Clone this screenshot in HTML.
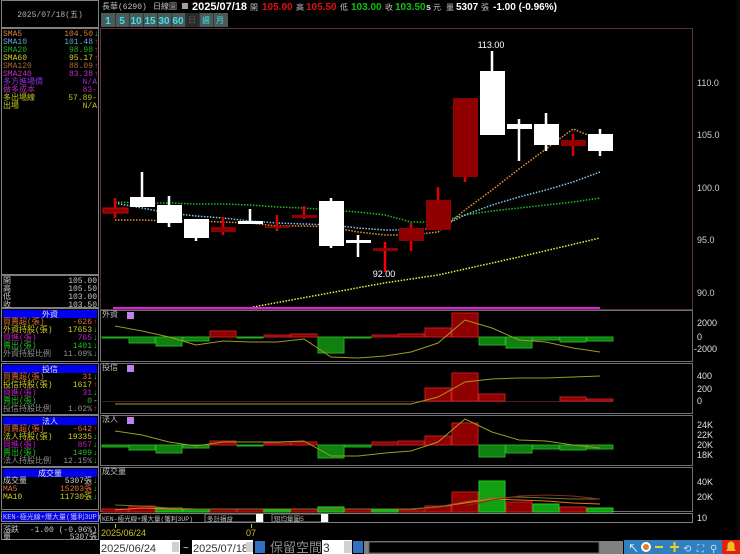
<!DOCTYPE html>
<html><head><meta charset="utf-8"><style>
html,body{margin:0;padding:0;background:#000;width:740px;height:554px;overflow:hidden}
svg{display:block}
text{font-family:"Liberation Mono","Noto Sans CJK TC",monospace;font-size:8px}
.s{font-family:"Liberation Sans","Noto Sans CJK TC",sans-serif}
</style></head><body>
<svg width="740" height="554" viewBox="0 0 740 554" xmlns="http://www.w3.org/2000/svg">
<rect width="740" height="554" fill="#000"/>
<!-- left panel -->
<rect x="1.5" y="0.5" width="97" height="27" fill="none" stroke="#808080"/>
<text x="50" y="17" fill="#b0b0b0" text-anchor="middle">2025/07/18(五)</text>
<rect x="1.5" y="28.5" width="97" height="246" fill="none" stroke="#808080"/>
<g text-anchor="start" style="font-size:7.5px">
<text x="3" y="36" fill="#e08030">SMA5</text><text x="93" y="36" fill="#e08030" text-anchor="end">104.50</text><text x="94" y="36" fill="#20d020">↓</text>
<text x="3" y="44" fill="#60a8d0">SMA10</text><text x="93" y="44" fill="#60a8d0" text-anchor="end">101.48</text><text x="94" y="44" fill="#e02020">↑</text>
<text x="3" y="52" fill="#20b020">SMA20</text><text x="93" y="52" fill="#20b020" text-anchor="end">98.98</text><text x="94" y="52" fill="#e02020">↑</text>
<text x="3" y="60" fill="#d0d020">SMA60</text><text x="93" y="60" fill="#d0d020" text-anchor="end">95.17</text><text x="94" y="60" fill="#e02020">↑</text>
<text x="3" y="68" fill="#b06830">SMA120</text><text x="93" y="68" fill="#b06830" text-anchor="end">88.09</text><text x="94" y="68" fill="#e02020">↑</text>
<text x="3" y="76" fill="#c030c0">SMA240</text><text x="93" y="76" fill="#c030c0" text-anchor="end">83.38</text><text x="94" y="76" fill="#e02020">↑</text>
<text x="3" y="84" fill="#9030e0">多方進場價</text><text x="97" y="84" fill="#9030e0" text-anchor="end">N/A</text>
<text x="3" y="92" fill="#b030b0">做多成本</text><text x="97" y="92" fill="#b030b0" text-anchor="end">83-</text>
<text x="3" y="100" fill="#c0c020">多出場線</text><text x="97" y="100" fill="#c0c020" text-anchor="end">57.89-</text>
<text x="3" y="108" fill="#c0c020">出場</text><text x="97" y="108" fill="#c0c020" text-anchor="end">N/A</text>
</g>
<rect x="1.5" y="275.5" width="97" height="32" fill="none" stroke="#808080"/>
<g fill="#c8c8c8">
<text x="3" y="283">開</text><text x="97" y="283" text-anchor="end">105.00</text>
<text x="3" y="291">高</text><text x="97" y="291" text-anchor="end">105.50</text>
<text x="3" y="299">低</text><text x="97" y="299" text-anchor="end">103.00</text>
<text x="3" y="307">收</text><text x="97" y="307" text-anchor="end">103.50</text>
</g>
<!-- sections -->
<g style="font-size:7.5px">
<rect x="1.5" y="308.5" width="97" height="53" fill="none" stroke="#808080"/>
<rect x="3" y="310" width="94" height="8" fill="#0000f0"/><text x="50" y="317" fill="#e0e0e0" text-anchor="middle">外資</text>
<text x="3" y="324" fill="#e07030">買賣超(張)</text><text x="92" y="324" fill="#e07030" text-anchor="end">-626</text><text x="93" y="324" fill="#e02020">↑</text>
<text x="3" y="332" fill="#d0d020">外資持股(張)</text><text x="92" y="332" fill="#d0d020" text-anchor="end">17653</text><text x="93" y="332" fill="#20d020">↓</text>
<text x="3" y="340" fill="#c020c0">買進(張)</text><text x="92" y="340" fill="#c020c0" text-anchor="end">765</text><text x="93" y="340" fill="#20d020">↓</text>
<text x="3" y="348" fill="#20c020">賣出(張)</text><text x="92" y="348" fill="#20c020" text-anchor="end">1401</text><text x="93" y="348" fill="#20d020">↓</text>
<text x="3" y="356" fill="#909090">外資持股比例</text><text x="92" y="356" fill="#909090" text-anchor="end">11.09%</text><text x="93" y="356" fill="#20d020">↓</text>

<rect x="1.5" y="363.5" width="97" height="51" fill="none" stroke="#808080"/>
<rect x="3" y="365" width="94" height="8" fill="#0000f0"/><text x="50" y="372" fill="#e0e0e0" text-anchor="middle">投信</text>
<text x="3" y="379" fill="#e07030">買賣超(張)</text><text x="92" y="379" fill="#e07030" text-anchor="end">31</text><text x="93" y="379" fill="#20d020">↓</text>
<text x="3" y="387" fill="#d0d020">投信持股(張)</text><text x="92" y="387" fill="#d0d020" text-anchor="end">1617</text><text x="93" y="387" fill="#e02020">↑</text>
<text x="3" y="395" fill="#c020c0">買進(張)</text><text x="92" y="395" fill="#c020c0" text-anchor="end">31</text><text x="93" y="395" fill="#20d020">↓</text>
<text x="3" y="403" fill="#20c020">賣出(張)</text><text x="92" y="403" fill="#20c020" text-anchor="end">0</text><text x="93" y="403" fill="#c0c0c0">-</text>
<text x="3" y="411" fill="#909090">投信持股比例</text><text x="92" y="411" fill="#909090" text-anchor="end">1.02%</text><text x="93" y="411" fill="#e02020">↑</text>

<rect x="1.5" y="415.5" width="97" height="51" fill="none" stroke="#808080"/>
<rect x="3" y="417" width="94" height="8" fill="#0000f0"/><text x="50" y="424" fill="#e0e0e0" text-anchor="middle">法人</text>
<text x="3" y="431" fill="#e07030">買賣超(張)</text><text x="92" y="431" fill="#e07030" text-anchor="end">-642</text><text x="93" y="431" fill="#e02020">↑</text>
<text x="3" y="439" fill="#d0d020">法人持股(張)</text><text x="92" y="439" fill="#d0d020" text-anchor="end">19335</text><text x="93" y="439" fill="#20d020">↓</text>
<text x="3" y="447" fill="#c020c0">買進(張)</text><text x="92" y="447" fill="#c020c0" text-anchor="end">857</text><text x="93" y="447" fill="#20d020">↓</text>
<text x="3" y="455" fill="#20c020">賣出(張)</text><text x="92" y="455" fill="#20c020" text-anchor="end">1499</text><text x="93" y="455" fill="#20d020">↓</text>
<text x="3" y="463" fill="#909090">法人持股比例</text><text x="92" y="463" fill="#909090" text-anchor="end">12.15%</text><text x="93" y="463" fill="#20d020">↓</text>

<rect x="1.5" y="467.5" width="97" height="42" fill="none" stroke="#808080"/>
<rect x="3" y="469" width="94" height="8" fill="#0000f0"/><text x="50" y="476" fill="#e0e0e0" text-anchor="middle">成交量</text>
<text x="3" y="483" fill="#d0d0d0">成交量</text><text x="92" y="483" fill="#d0d0d0" text-anchor="end">5307張</text><text x="93" y="483" fill="#20d020">↓</text>
<text x="3" y="491" fill="#e07030">MA5</text><text x="92" y="491" fill="#e07030" text-anchor="end">15203張</text><text x="93" y="491" fill="#20d020">↓</text>
<text x="3" y="499" fill="#d0d020">MA10</text><text x="92" y="499" fill="#d0d020" text-anchor="end">11730張</text><text x="93" y="499" fill="#20d020">↓</text>

<rect x="1.5" y="511.5" width="97" height="10" fill="#0000e0" stroke="#808080"/>
<text x="3" y="519" fill="#c0c0ff" style="font-size:7px">KEN-極光線+爆大量(獲利3UP)</text>
<rect x="1.5" y="523.5" width="97" height="16" fill="none" stroke="#808080"/>
<text x="3" y="532" fill="#c8c8c8">漲跌</text><text x="97" y="532" fill="#c8c8c8" text-anchor="end">-1.00 (-0.96%)</text>
<text x="3" y="539" fill="#c8c8c8">量</text><text x="97" y="539" fill="#c8c8c8" text-anchor="end">5307張</text>
</g>

<!-- top bar -->
<text x="102" y="9" fill="#c0c0c0">長華(6290)</text>
<text x="153" y="9" fill="#c0c0c0">日線圖</text>
<rect x="182" y="3" width="6" height="6" fill="#a0a0a0"/>
<g>
<text x="192" y="10" fill="#fff" class="s" style="font-size:11px;font-weight:bold">2025/07/18</text>
<text x="250" y="10" fill="#c0c0c0">開</text><text x="262" y="10" fill="#e01010" class="s" style="font-size:10px;font-weight:bold">105.00</text>
<text x="296" y="10" fill="#c0c0c0">高</text><text x="306" y="10" fill="#e01010" class="s" style="font-size:10px;font-weight:bold">105.50</text>
<text x="340" y="10" fill="#c0c0c0">低</text><text x="351" y="10" fill="#10c010" class="s" style="font-size:10px;font-weight:bold">103.00</text>
<text x="385" y="10" fill="#c0c0c0">收</text><text x="395" y="10" fill="#10c010" class="s" style="font-size:10px;font-weight:bold">103.50</text>
<text x="426" y="10" fill="#e0e0e0" class="s" style="font-size:9px;font-weight:bold">s</text><text x="433" y="10" fill="#c0c0c0">元</text>
<text x="446" y="10" fill="#c0c0c0">量</text><text x="456" y="10" fill="#fff" class="s" style="font-size:10px;font-weight:bold">5307</text>
<text x="481" y="10" fill="#c0c0c0">張</text>
<text x="493" y="10" fill="#fff" class="s" style="font-size:10px;font-weight:bold">-1.00 (-0.96%)</text>
</g>
<g>
<rect x="101" y="13" width="127" height="14" fill="#4a5a5a"/>
<g stroke="#303838"><line x1="115.5" y1="13" x2="115.5" y2="27"/><line x1="129.5" y1="13" x2="129.5" y2="27"/><line x1="143.5" y1="13" x2="143.5" y2="27"/><line x1="157.5" y1="13" x2="157.5" y2="27"/><line x1="171.5" y1="13" x2="171.5" y2="27"/><line x1="185.5" y1="13" x2="185.5" y2="27"/><line x1="199.5" y1="13" x2="199.5" y2="27"/><line x1="213.5" y1="13" x2="213.5" y2="27"/></g>
<rect x="186" y="13" width="13" height="14" fill="#2a2a2a"/>
<g fill="#40e0e8" text-anchor="middle">
<text x="108" y="24" class="s" style="font-size:10px;font-weight:bold">1</text><text x="122" y="24" class="s" style="font-size:10px;font-weight:bold">5</text><text x="136" y="24" class="s" style="font-size:10px;font-weight:bold">10</text><text x="150" y="24" class="s" style="font-size:10px;font-weight:bold">15</text><text x="164" y="24" class="s" style="font-size:10px;font-weight:bold">30</text><text x="178" y="24" class="s" style="font-size:10px;font-weight:bold">60</text>
<text x="192" y="23" fill="#555">日</text><text x="206" y="23">週</text><text x="220" y="23">月</text>
</g>
</g>

<!-- main chart -->
<rect x="100.5" y="28.5" width="592" height="281" fill="none" stroke="#603040"/>
<g fill="#d0d0d0">
<text x="697" y="86" class="s" style="font-size:9px">110.0</text><text x="697" y="138" class="s" style="font-size:9px">105.0</text><text x="697" y="191" class="s" style="font-size:9px">100.0</text><text x="697" y="243" class="s" style="font-size:9px">95.0</text><text x="697" y="296" class="s" style="font-size:9px">90.0</text>
</g>
<!-- MA lines -->
<g fill="none" stroke-width="1.5" stroke-dasharray="1.5 1.5">
<polyline stroke="#20c020" points="115,202 142,203 169,203 196,204 223,204 250,205 277,207 304,208 331,210 358,212 385,215 411,222 438,222 465,215 492,211 519,208 546,205 573,202 600,198"/>
<polyline stroke="#80c8f0" points="115,203 142,208 169,213 196,216 223,218 250,221 277,223 304,224 331,225 358,228 385,230 411,230 438,228 465,215 492,205 519,197 546,190 573,182 600,172"/>
<polyline stroke="#f09030" points="115,220 142,220 169,221 196,221 223,222 250,223 277,226 304,226 331,227 358,232 385,235 411,235 438,232 465,210 492,190 519,169 546,149 573,129 600,140"/>
<polyline stroke="#f0f040" points="253,307 384,283 438,275 519,257 600,238"/>
</g>
<!-- candles -->
<g>
<line x1="115" y1="198" x2="115" y2="218" stroke="#e00000" stroke-width="2.5"/><rect x="103" y="208" width="25" height="5" fill="#900000" stroke="#c01010"/>
<line x1="142" y1="172" x2="142" y2="207" stroke="#fff" stroke-width="2.5"/><rect x="130" y="197" width="25" height="10" fill="#fff"/>
<line x1="169" y1="196" x2="169" y2="227" stroke="#fff" stroke-width="2.5"/><rect x="157" y="205" width="25" height="18" fill="#fff"/>
<line x1="196" y1="219" x2="196" y2="241" stroke="#fff" stroke-width="2.5"/><rect x="184" y="219" width="25" height="19" fill="#fff"/>
<line x1="223" y1="217" x2="223" y2="235" stroke="#e00000" stroke-width="2.5"/><rect x="211" y="227" width="25" height="5" fill="#900000"/>
<line x1="250" y1="209" x2="250" y2="224" stroke="#fff" stroke-width="2.5"/><rect x="238" y="221" width="25" height="3" fill="#fff"/>
<line x1="277" y1="215" x2="277" y2="231" stroke="#e00000" stroke-width="2.5"/><rect x="265" y="226" width="25" height="2" fill="#900000"/>
<line x1="304" y1="206" x2="304" y2="219" stroke="#e00000" stroke-width="2.5"/><rect x="292" y="215" width="25" height="3" fill="#900000"/>
<line x1="331" y1="198" x2="331" y2="248" stroke="#fff" stroke-width="2.5"/><rect x="319" y="201" width="25" height="45" fill="#fff"/>
<line x1="358" y1="235" x2="358" y2="257" stroke="#fff" stroke-width="2.5"/><rect x="346" y="240" width="25" height="3" fill="#fff"/>
<line x1="385" y1="242" x2="385" y2="272" stroke="#ff0000" stroke-width="2.5"/><rect x="373" y="248" width="25" height="3" fill="#900000"/>
<line x1="411" y1="223" x2="411" y2="251" stroke="#e00000" stroke-width="2.5"/><rect x="399" y="228" width="25" height="13" fill="#900000"/>
<line x1="438" y1="187" x2="438" y2="230" stroke="#e00000" stroke-width="2.5"/><rect x="426" y="200" width="25" height="30" fill="#900000"/>
<line x1="465" y1="98" x2="465" y2="182" stroke="#e00000" stroke-width="2.5"/><rect x="453" y="98" width="25" height="79" fill="#900000"/>
<line x1="492" y1="51" x2="492" y2="135" stroke="#fff" stroke-width="2.5"/><rect x="480" y="71" width="25" height="64" fill="#fff"/>
<line x1="519" y1="119" x2="519" y2="161" stroke="#fff" stroke-width="2.5"/><rect x="507" y="124" width="25" height="5" fill="#fff"/>
<line x1="546" y1="113" x2="546" y2="151" stroke="#fff" stroke-width="2.5"/><rect x="534" y="124" width="25" height="21" fill="#fff"/>
<line x1="573" y1="134" x2="573" y2="156" stroke="#e00000" stroke-width="2.5"/><rect x="561" y="140" width="25" height="6" fill="#900000"/>
<line x1="600" y1="129" x2="600" y2="156" stroke="#fff" stroke-width="2.5"/><rect x="588" y="134" width="25" height="17" fill="#fff"/>
</g>
<text x="491" y="48" fill="#fff" text-anchor="middle" class="s" style="font-size:9px">113.00</text>
<text x="384" y="277" fill="#fff" text-anchor="middle" class="s" style="font-size:9px">92.00</text>
<rect x="113" y="307" width="487" height="2" fill="#e020e0"/>

<!-- sub panels -->
<g fill="none" stroke="#707070">
<rect x="100.5" y="310.5" width="592" height="51"/>
<rect x="100.5" y="363.5" width="592" height="50"/>
<rect x="100.5" y="415.5" width="592" height="50"/>
<rect x="100.5" y="467.5" width="592" height="44"/>
</g>
<g fill="#c0c0c0">
<text x="102" y="317">外資</text><text x="102" y="370">投信</text><text x="102" y="422">法人</text><text x="102" y="474">成交量</text>
</g>
<g fill="#c080f0"><rect x="127" y="312" width="7" height="7"/><rect x="127" y="365" width="7" height="7"/><rect x="127" y="417" width="7" height="7"/></g>
<g fill="#e0e0e0">
<text x="697" y="326" class="s" style="font-size:9px">2000</text><text x="697" y="340" class="s" style="font-size:9px">0</text><text x="694" y="352" class="s" style="font-size:9px">-2000</text>
<text x="697" y="379" class="s" style="font-size:9px">400</text><text x="697" y="392" class="s" style="font-size:9px">200</text><text x="697" y="404" class="s" style="font-size:9px">0</text>
<text x="697" y="428" class="s" style="font-size:9px">24K</text><text x="697" y="438" class="s" style="font-size:9px">22K</text><text x="697" y="448" class="s" style="font-size:9px">20K</text><text x="697" y="458" class="s" style="font-size:9px">18K</text>
<text x="697" y="485" class="s" style="font-size:9px">40K</text><text x="697" y="500" class="s" style="font-size:9px">20K</text>
</g>
<g stroke-width="1">
<g fill="#108010" stroke="#20b020">
<rect x="102" y="337" width="26" height="1"/><rect x="129" y="337" width="26" height="6"/><rect x="156" y="337" width="26" height="9"/><rect x="183" y="337" width="26" height="4"/><rect x="237" y="337" width="26" height="1"/><rect x="318" y="337" width="26" height="16"/><rect x="345" y="337" width="26" height="1"/><rect x="479" y="337" width="26" height="8"/><rect x="506" y="337" width="26" height="11"/><rect x="533" y="337" width="26" height="3"/><rect x="560" y="337" width="26" height="5"/><rect x="587" y="337" width="26" height="4"/>
</g>
<g fill="#900000" stroke="#c02020">
<rect x="210" y="331" width="26" height="6"/><rect x="264" y="335" width="26" height="2"/><rect x="291" y="334" width="26" height="3"/><rect x="372" y="335" width="26" height="2"/><rect x="398" y="334" width="26" height="3"/><rect x="425" y="328" width="26" height="9"/><rect x="452" y="313" width="26" height="24"/>
</g>
</g>
<polyline fill="none" stroke="#a09a20" points="115,326 142,331 169,337 196,345 223,341 250,342 277,342 304,339 331,357 358,358 385,356 411,352 438,343 465,320 492,328 519,340 546,342 573,348 600,352"/>
<line x1="102" y1="401.5" x2="613" y2="401.5" stroke="#402020"/>
<g fill="#900000" stroke="#c02020">
<rect x="425" y="388" width="26" height="13"/><rect x="452" y="373" width="26" height="28"/><rect x="479" y="394" width="26" height="7"/><rect x="560" y="397" width="26" height="4"/><rect x="587" y="399" width="26" height="2"/>
</g>
<polyline fill="none" stroke="#a09a20" points="115,404 411,404 438,397 465,382 492,379 519,378 546,378 573,377 600,376"/>
<g fill="#108010" stroke="#20b020">
<rect x="102" y="445" width="26" height="2"/><rect x="129" y="445" width="26" height="5"/><rect x="156" y="445" width="26" height="8"/><rect x="183" y="445" width="26" height="3"/><rect x="237" y="445" width="26" height="1"/><rect x="318" y="445" width="26" height="13"/><rect x="345" y="445" width="26" height="2"/><rect x="479" y="445" width="26" height="12"/><rect x="506" y="445" width="26" height="8"/><rect x="533" y="445" width="26" height="4"/><rect x="560" y="445" width="26" height="5"/><rect x="587" y="445" width="26" height="4"/>
</g>
<g fill="#900000" stroke="#c02020">
<rect x="210" y="441" width="26" height="4"/><rect x="264" y="443" width="26" height="2"/><rect x="291" y="442" width="26" height="3"/><rect x="372" y="442" width="26" height="3"/><rect x="398" y="441" width="26" height="4"/><rect x="425" y="436" width="26" height="9"/><rect x="452" y="423" width="26" height="22"/>
</g>
<polyline fill="none" stroke="#a09a20" points="115,431 142,435 169,442 196,446 223,442 250,442 277,442 304,441 331,456 358,456 385,453 411,451 438,442 465,419 492,432 519,440 546,441 573,445 600,448"/>
<g fill="#900000" stroke="#c02020">
<rect x="102" y="509" width="26" height="3"/><rect x="129" y="506" width="26" height="6"/><rect x="210" y="509" width="26" height="3"/><rect x="237" y="509" width="26" height="3"/><rect x="291" y="509" width="26" height="3"/><rect x="345" y="509" width="26" height="3"/><rect x="398" y="510" width="26" height="2"/><rect x="425" y="506" width="26" height="6"/><rect x="452" y="492" width="26" height="20"/><rect x="506" y="502" width="26" height="10"/><rect x="560" y="507" width="26" height="5"/>
</g>
<g fill="#10a010" stroke="#20d020">
<rect x="156" y="508" width="26" height="4"/><rect x="183" y="509" width="26" height="3"/><rect x="264" y="510" width="26" height="2"/><rect x="318" y="507" width="26" height="5"/><rect x="372" y="510" width="26" height="2"/><rect x="479" y="481" width="26" height="31"/><rect x="533" y="504" width="26" height="8"/><rect x="587" y="508" width="26" height="4"/>
</g>
<polyline fill="none" stroke="#f07020" points="115,510 142,508 169,509 196,509 223,509 250,509 277,509 304,509 331,509 358,509 385,509 411,509 438,507 465,503 492,499 519,500 546,501 573,503 600,504"/>
<polyline fill="none" stroke="#807020" points="115,505 142,506 169,508 196,509 304,509 411,509 438,507 465,502 492,498 519,497 546,498 573,499 600,499"/>
<polyline fill="none" stroke="#803020" points="465,506 492,500 519,496 546,495 573,496 600,499"/>

<!-- KEN row -->
<rect x="100.5" y="513.5" width="592" height="9" fill="none" stroke="#808080"/>
<text x="102" y="521" fill="#c0c0c0" style="font-size:6.5px">KEN-極光線+爆大量(獲利3UP)</text>
<rect x="205" y="514" width="58" height="8" fill="#000" stroke="#808080"/><text x="207" y="521" fill="#c0c0c0" style="font-size:6.5px">多計損益</text><rect x="256" y="514" width="7" height="8" fill="#fff"/>
<rect x="272" y="514" width="56" height="8" fill="#000" stroke="#808080"/><text x="274" y="521" fill="#c0c0c0" style="font-size:6.5px">短均量圖5</text><rect x="321" y="514" width="7" height="8" fill="#fff"/>
<text x="697" y="521" fill="#e0e0e0" class="s" style="font-size:9px">10</text>
<line x1="115.5" y1="524" x2="115.5" y2="528" stroke="#c0c020"/><line x1="251.5" y1="524" x2="251.5" y2="528" stroke="#c0c020"/>
<text x="101" y="536" fill="#d0c020" class="s" style="font-size:9px">2025/06/24</text>
<text x="246" y="536" fill="#d0c020" class="s" style="font-size:9px">07</text>

<!-- bottom bar -->
<rect x="100" y="540" width="80" height="14" fill="#fff"/>
<text x="101" y="552" fill="#333" class="s" style="font-size:11px">2025/06/24</text>
<rect x="172" y="542" width="7" height="10" fill="#d0d0d0"/>
<text x="183" y="551" fill="#e0e0e0" class="s" style="font-size:10px">~</text>
<rect x="192" y="540" width="61" height="14" fill="#fff"/>
<text x="193" y="552" fill="#333" class="s" style="font-size:11px">2025/07/18</text>
<rect x="246" y="542" width="7" height="10" fill="#d0d0d0"/>
<rect x="255" y="541" width="10" height="12" fill="#3070c0"/>
<text x="270" y="552" fill="#909090" class="s" style="font-size:13px">保留空間</text>
<rect x="322" y="540" width="30" height="14" fill="#fff"/>
<text x="323" y="552" fill="#333" class="s" style="font-size:12px">3</text>
<rect x="344" y="541" width="8" height="12" fill="#d0d0d0"/>
<rect x="353" y="541" width="10" height="12" fill="#3070c0"/>
<rect x="364" y="541" width="259" height="13" fill="#808080"/>
<rect x="369" y="542" width="230" height="11" fill="#000" stroke="#606060"/>
<rect x="624" y="540" width="116" height="14" fill="#3080c0"/>
<g fill="#fff">
<text x="628" y="552" class="s" style="font-size:11px">↖</text>
<circle cx="646" cy="547" r="5" fill="#fff"/><circle cx="646" cy="547" r="3" fill="#e08020"/>
<rect x="655" y="546" width="8" height="2" fill="#f0d020"/>
<rect x="670" y="546" width="9" height="2" fill="#f0d020"/><rect x="673.5" y="542" width="2" height="10" fill="#f0d020"/>
<text x="683" y="552" class="s" style="font-size:10px;fill:#c0e0ff">⟲</text>
<text x="697" y="552" class="s" style="font-size:10px;fill:#c0e0ff">⛶</text>
<text x="710" y="552" class="s" style="font-size:10px;fill:#c0e0ff">⚲</text>
</g>
<rect x="722" y="540" width="18" height="14" fill="#e02010"/>
<path d="M726 551 h10 l-1.5-2 v-4 a3.5 3.5 0 0 0-7 0 v4 z" fill="#f0c020"/>
<rect x="737" y="0" width="3" height="540" fill="#0a0a0a"/>
</svg>
</body></html>
